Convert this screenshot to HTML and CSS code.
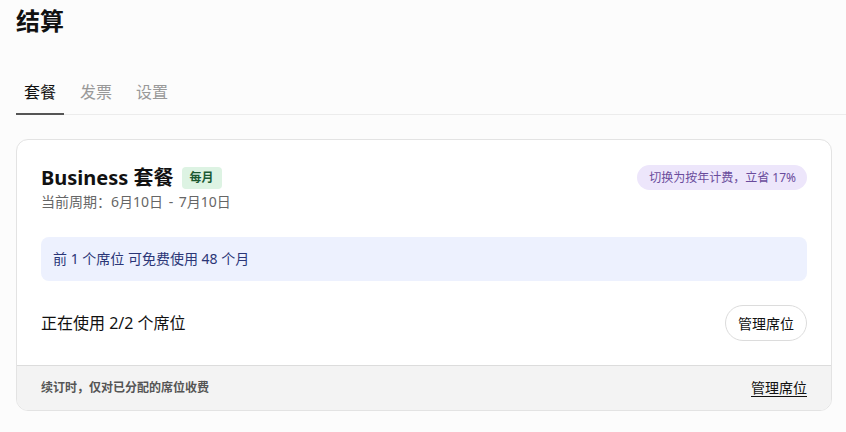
FILE: index.html
```html
<!DOCTYPE html>
<html lang="zh-CN">
<head>
<meta charset="utf-8">
<link rel="stylesheet" href="styles.css">
</head>
<body>
<div class="page">
  <h1 class="title">结算</h1>
  <nav class="tabs">
    <div class="tab active">套餐</div>
    <div class="tab">发票</div>
    <div class="tab">设置</div>
  </nav>
  <section class="card">
    <div class="card-body">
      <div class="head">
        <div class="head-left">
          <div class="plan-row">
            <span class="plan-name">Business 套餐</span>
            <span class="badge">每月</span>
          </div>
          <div class="period">当前周期：6月10日 - 7月10日</div>
        </div>
        <span class="pill">切换为按年计费，立省 17%</span>
      </div>
      <div class="notice">前 1 个席位 可免费使用 48 个月</div>
      <div class="seats">
        <span class="seats-text">正在使用 2/2 个席位</span>
        <button class="btn">管理席位</button>
      </div>
    </div>
    <div class="card-foot">
      <span class="foot-text">续订时，仅对已分配的席位收费</span>
      <a class="foot-link">管理席位</a>
    </div>
  </section>
</div>
</body>
</html>
```
FILE: styles.css
```css
* { box-sizing: border-box; }
html, body { margin: 0; padding: 0; background: #fcfcfc; }
body {
  font-family: "Noto Sans", "Noto Sans CJK SC", sans-serif;
  color: #111;
}
.page { padding: 5px 14px 0 16px; }
.title {
  margin: 0;
  font-size: 24px;
  line-height: 32px;
  font-weight: 700;
  color: #111;
}
.tabs {
  display: flex;
  gap: 8px;
  margin-top: 36px;
  margin-right: -14px;
  border-bottom: 1px solid #ececec;
}
.tab {
  padding: 8px 8px 9px;
  font-size: 16px;
  line-height: 23px;
  color: #999;
  margin-bottom: -1px;
  border-bottom: 2px solid transparent;
}
.tab.active { color: #111; border-bottom-color: #555; }
.card {
  margin-top: 24px;
  background: #fff;
  border: 1px solid #e3e3e3;
  border-radius: 12px;
  overflow: hidden;
}
.card-body { padding: 24px 24px 24px 24px; }
.head { display: flex; justify-content: space-between; align-items: flex-start; }
.plan-row { display: flex; align-items: center; gap: 8px; }
.plan-name { font-size: 20px; line-height: 28px; font-weight: 700; color: #111; }
.badge {
  background: #ddf3e3;
  color: #1b5a33;
  font-size: 12px;
  font-weight: 700;
  line-height: 22px;
  padding: 0 8px;
  border-radius: 4px;
}
.period { font-size: 14px; line-height: 20px; color: #666; word-spacing: 2px; }
.pill {
  margin-top: 1px;
  background: #ede6fb;
  color: #6a4c9c;
  font-size: 12px;
  line-height: 25px;
  padding: 0 11px 0 12px;
  border-radius: 13px;
}
.notice {
  margin-top: 25px;
  background: #edf1fe;
  color: #2b3677;
  font-size: 14px;
  line-height: 20px;
  padding: 12px 12px;
  border-radius: 8px;
}
.seats {
  margin-top: 24px;
  display: flex;
  justify-content: space-between;
  align-items: center;
}
.seats-text { font-size: 16px; line-height: 24px; color: #111; }
.btn {
  font-family: inherit;
  font-size: 14px;
  height: 36px;
  padding: 0 12px;
  background: #fff;
  color: #111;
  border: 1px solid #dcdcdc;
  border-radius: 18px;
}
.card-foot {
  display: flex;
  justify-content: space-between;
  align-items: center;
  background: #f3f3f3;
  border-top: 1px solid #dcdcdc;
  padding: 12px 24px;
}
.foot-text { font-size: 12px; line-height: 20px; font-weight: 700; color: #555; }
.foot-link { font-size: 14px; line-height: 20px; color: #111; text-decoration: underline; text-underline-offset: 3px; }
```
